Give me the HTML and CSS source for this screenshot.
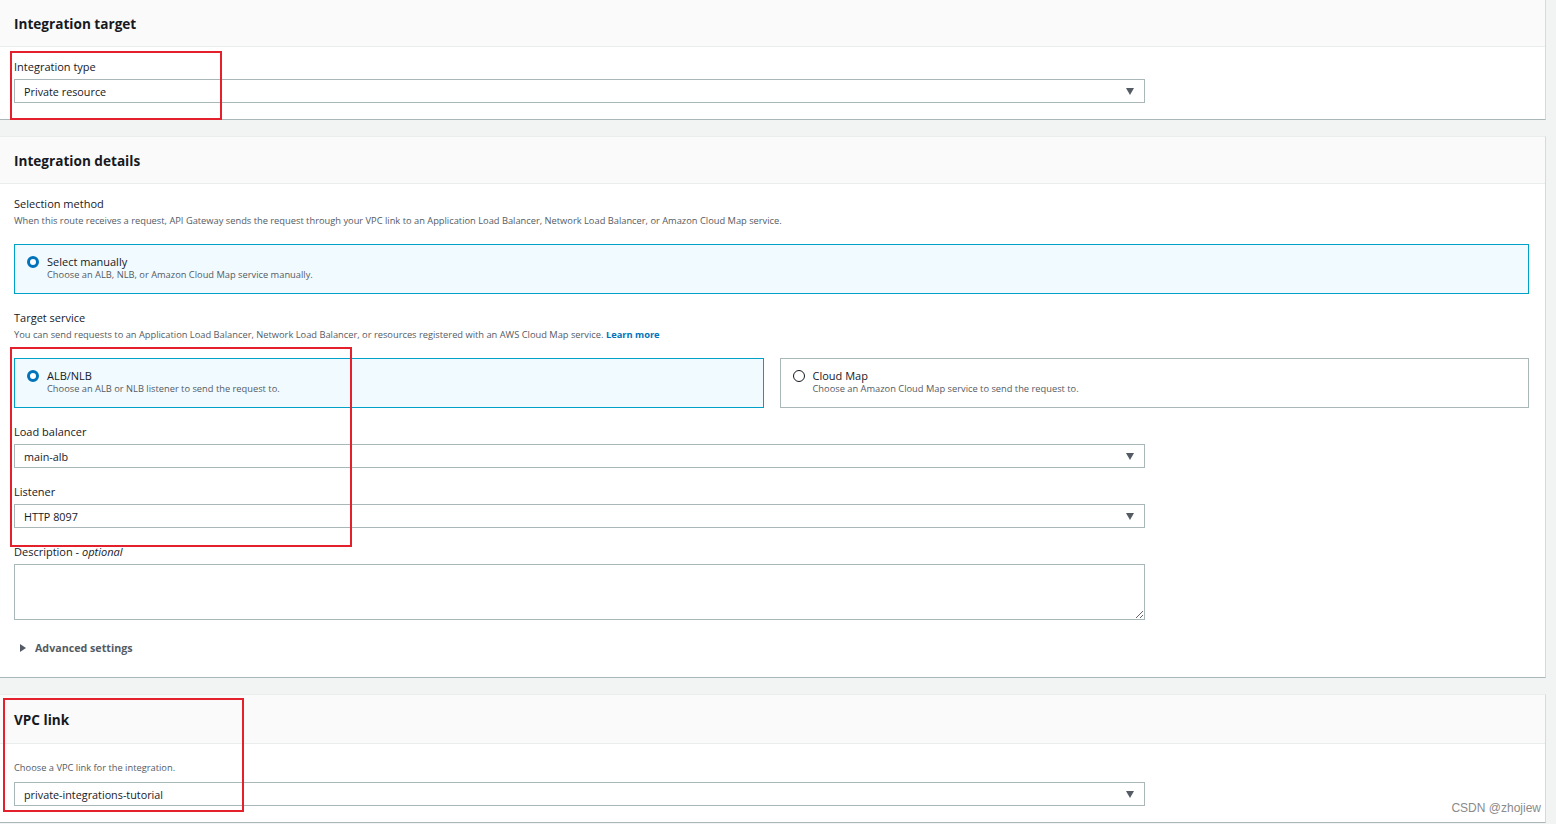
FILE: index.html
```html
<!DOCTYPE html>
<html lang="en">
<head>
  <meta charset="UTF-8">
  <title>Integration</title>
  <link rel="stylesheet" href="styles.css">
</head>
<body>

  <!-- Integration target -->
  <div class="card card-first">
    <div class="card-header"><h2>Integration target</h2></div>
    <div class="card-body">
      <div class="field">
        <label class="field-label">Integration type</label>
        <div class="select"><span>Private resource</span><span class="caret"></span></div>
      </div>
    </div>
  </div>

  <!-- Integration details -->
  <div class="card">
    <div class="card-header"><h2>Integration details</h2></div>
    <div class="card-body">
      <div class="field">
        <label class="field-label">Selection method</label>
        <p class="field-desc">When this route receives a request, API Gateway sends the request through your VPC link to an Application Load Balancer, Network Load Balancer, or Amazon Cloud Map service.</p>
        <div class="tiles">
          <div class="tile checked">
            <span class="radio"></span>
            <div>
              <div class="tile-title">Select manually</div>
              <div class="tile-desc">Choose an ALB, NLB, or Amazon Cloud Map service manually.</div>
            </div>
          </div>
        </div>
      </div>

      <div class="field">
        <label class="field-label">Target service</label>
        <p class="field-desc">You can send requests to an Application Load Balancer, Network Load Balancer, or resources registered with an AWS Cloud Map service. <a href="#">Learn more</a></p>
        <div class="tiles two">
          <div class="tile checked">
            <span class="radio"></span>
            <div>
              <div class="tile-title">ALB/NLB</div>
              <div class="tile-desc">Choose an ALB or NLB listener to send the request to.</div>
            </div>
          </div>
          <div class="tile">
            <span class="radio"></span>
            <div>
              <div class="tile-title">Cloud Map</div>
              <div class="tile-desc">Choose an Amazon Cloud Map service to send the request to.</div>
            </div>
          </div>
        </div>
      </div>

      <div class="field">
        <label class="field-label">Load balancer</label>
        <div class="select"><span>main-alb</span><span class="caret"></span></div>
      </div>

      <div class="field">
        <label class="field-label">Listener</label>
        <div class="select"><span>HTTP 8097</span><span class="caret"></span></div>
      </div>

      <div class="field">
        <label class="field-label">Description - <i>optional</i></label>
        <textarea class="textarea"></textarea>
      </div>

      <div class="expander"><span class="tri"></span>Advanced settings</div>
    </div>
  </div>

  <!-- VPC link -->
  <div class="card card-last">
    <div class="card-header tall"><h2>VPC link</h2></div>
    <div class="card-body">
      <div class="field">
        <p class="field-desc vpc">Choose a VPC link for the integration.</p>
        <div class="select"><span>private-integrations-tutorial</span><span class="caret"></span></div>
      </div>
    </div>
  </div>

  <!-- annotation boxes -->
  <div class="mark mark-1"></div>
  <div class="mark mark-2"></div>
  <div class="mark mark-3"></div>

  <div class="watermark">CSDN @zhojiew</div>

</body>
</html>
```

FILE: styles.css
```css
body {
  font-family: "Open Sans", "Noto Sans", sans-serif;
  background-color: #f2f3f3;
  margin: 0;
  color: #16191f;
  position: relative;
  height: 824px;
  overflow: hidden;
}
.card {
  background-color: white;
  margin-right: 10px;
  margin-bottom: 16px;
  border-right: 1px solid #d5dbdb;
  border-bottom: 1px solid #aab7b8;
  border-top: 1px solid #eaeded;
}
.card-first {
  border-top: none;
}
.card-header {
  background-color: #fafafa;
  border-bottom: 1px solid #eaeded;
  height: 46px;
  display: flex;
  align-items: center;
  padding: 0 14px;
}
.card-header.tall {
  height: 48px;
}
.card-header h2 {
  margin: 0;
  font-size: 13.6px;
  font-weight: 700;
}
.card-body {
  padding: 12px 16px 16px 14px;
}
.field {
  margin-bottom: 16px;
}
.field:last-child {
  margin-bottom: 0;
}
.field-label {
  display: block;
  font-size: 11px;
  line-height: 16px;
  margin-bottom: 4px;
}
.field-desc {
  font-size: 9.3px;
  line-height: 12px;
  color: #545b64;
  margin: -1px 0 17px;
}
.field-desc.vpc {
  margin: 6px 0 8px;
}
.field-desc a {
  color: #0073bb;
  font-weight: 700;
  text-decoration: none;
}
.select {
  width: 1131px;
  height: 24px;
  box-sizing: border-box;
  border: 1px solid #aab7b8;
  display: flex;
  align-items: center;
  justify-content: space-between;
  padding: 0 10px 0 9px;
  font-size: 10.8px;
}
.caret {
  width: 0;
  height: 0;
  border-left: 4px solid transparent;
  border-right: 4px solid transparent;
  border-top: 7px solid #545b64;
}
.tiles {
  display: grid;
  grid-template-columns: 1fr;
  gap: 16px;
}
.tiles.two {
  grid-template-columns: 1fr 1fr;
}
.tile {
  box-sizing: border-box;
  height: 50px;
  border: 1px solid #aab7b8;
  display: flex;
  align-items: flex-start;
  padding: 9px 12px 0 12px;
  gap: 8px;
}
.tile.checked {
  border-color: #00a1c9;
  background-color: #f1faff;
}
.radio {
  width: 12px;
  height: 12px;
  box-sizing: border-box;
  border-radius: 50%;
  border: 1.5px solid #16191f;
  background: white;
  margin-top: 2px;
  flex-shrink: 0;
}
.tile.checked .radio {
  border: 3.5px solid #0073bb;
}
.tile-title {
  font-size: 11px;
  line-height: 15px;
}
.tile-desc {
  font-size: 9.3px;
  line-height: 12px;
  color: #545b64;
}
.textarea {
  display: block;
  width: 1131px;
  height: 56px;
  box-sizing: border-box;
  border: 1px solid #aab7b8;
  margin: 0;
  font-family: inherit;
}
.expander {
  font-size: 10.7px;
  line-height: 16px;
  font-weight: 700;
  color: #545b64;
  display: flex;
  align-items: center;
  gap: 9px;
  padding-left: 6px;
  margin-top: 20px;
  margin-bottom: 5px;
}
.tri {
  width: 0;
  height: 0;
  border-top: 4px solid transparent;
  border-bottom: 4px solid transparent;
  border-left: 6px solid #545b64;
}
.mark {
  position: absolute;
  border: 2px solid #e3202b;
  box-sizing: border-box;
}
.mark-1 { left: 10px; top: 51px; width: 212px; height: 69px; }
.mark-2 { left: 10px; top: 347px; width: 342px; height: 200px; }
.mark-3 { left: 3px; top: 698px; width: 241px; height: 114px; }
.watermark {
  position: absolute;
  right: 15px;
  top: 801px;
  font-family: "Liberation Sans", Arial, sans-serif;
  font-size: 12px;
  color: #8a8a8a;
}
```
